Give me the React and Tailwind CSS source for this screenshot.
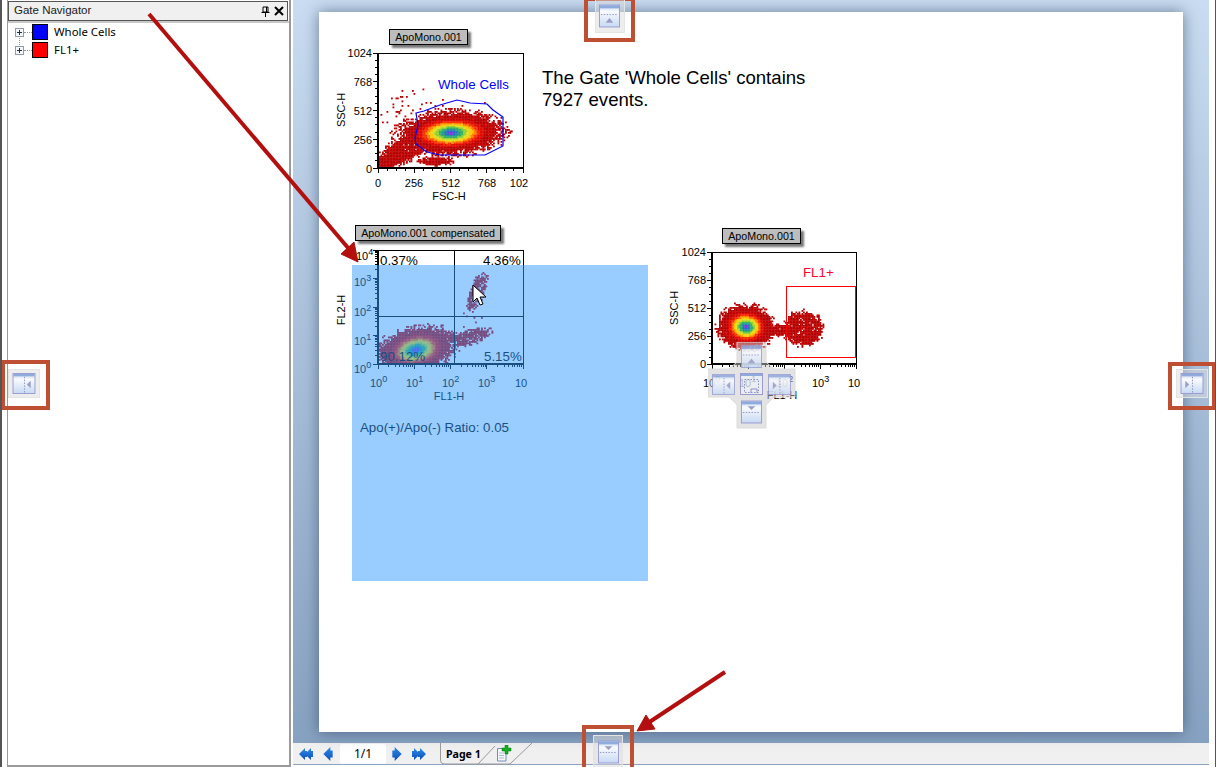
import React from "react";

function rngFrom(seed) {
  let s = seed >>> 0;
  return () => {
    s = (s * 1664525 + 1013904223) >>> 0;
    let t = s ^ (s >>> 15);
    t = (t * 2246822519) >>> 0;
    return ((t ^ (t >>> 13)) >>> 0) / 4294967296;
  };
}

function heat(l, r) {
  if (l > 0.66) return r() < 0.7 ? "#b40000" : "#c80000";
  if (l > 0.56) return "#e00800";
  if (l > 0.49) return "#f83000";
  if (l > 0.43) return "#ff8000";
  if (l > 0.37) return "#ffc800";
  if (l > 0.31) return "#e0e020";
  if (l > 0.25) return "#90d030";
  if (l > 0.18) return "#30b060";
  if (l > 0.12) return "#20909c";
  if (l > 0.07) return "#2868c8";
  return "#8030e0";
}

function density(blobs, box, cell, seed, noise) {
  const r = rngFrom(seed);
  const out = [];
  for (let y = box[1]; y < box[3]; y += cell) {
    for (let x = box[0]; x < box[2]; x += cell) {
      const cx = x + cell / 2;
      const cy = y + cell / 2;
      let best = 9;
      let pick = null;
      for (const b of blobs) {
        const a = ((b.rot || 0) * Math.PI) / 180;
        const dx = cx - b.cx;
        const dy = cy - b.cy;
        const u = (dx * Math.cos(a) + dy * Math.sin(a)) / b.rx;
        const v = (-dx * Math.sin(a) + dy * Math.cos(a)) / b.ry;
        const raw = Math.sqrt(u * u + v * v);
        const l = Math.max(b.floor || 0, raw);
        if (raw < 1.2 && l < best && r() < (b.p ?? 1)) {
          best = l;
          pick = b;
        }
      }
      if (!pick) continue;
      const edge = best > 0.75 ? noise : 0.05;
      const l = best * (1 + (r() - 0.5) * edge);
      if (l < 1) out.push([x, y, heat(l, r)]);
    }
  }
  return out;
}

const cloud1 = density(
  [
    { cx: 451, cy: 133, rx: 51, ry: 21, rot: -2 },
    { cx: 410, cy: 146, rx: 34, ry: 12, rot: -28, floor: 0.84 },
    { cx: 390, cy: 160, rx: 16, ry: 8, rot: -15, floor: 0.74 },
    { cx: 435, cy: 161, rx: 18, ry: 4, floor: 0.85 },
    { cx: 415, cy: 115, rx: 38, ry: 24, floor: 0.9, p: 0.08 },
    { cx: 470, cy: 108, rx: 28, ry: 8, floor: 0.9, p: 0.03 },
  ],
  [379, 54, 522, 167],
  1.5,
  11,
  0.42
);
const cloud2 = density(
  [
    { cx: 416, cy: 350, rx: 38, ry: 22, rot: -12 },
    { cx: 440, cy: 338, rx: 24, ry: 6, floor: 0.85, p: 0.8 },
    { cx: 477, cy: 292, rx: 20, ry: 7, rot: -68, floor: 0.85, p: 0.8 },
    { cx: 470, cy: 337, rx: 20, ry: 7, rot: -18, floor: 0.85, p: 0.8 },
    { cx: 470, cy: 318, rx: 12, ry: 10, floor: 0.9, p: 0.08 },
  ],
  [379, 251, 522, 363],
  1.5,
  23,
  0.4
);
const cloud3 = density(
  [
    { cx: 746, cy: 327, rx: 28, ry: 22, rot: 3 },
    { cx: 773, cy: 330, rx: 17, ry: 6, floor: 0.88 },
    { cx: 803, cy: 329, rx: 19, ry: 17, floor: 0.86, p: 0.9 },
  ],
  [713, 253, 855, 363],
  1.5,
  37,
  0.3
);

function Cloud({ cells }) {
  return (
    <g>
      {cells.map(([x, y, c], i) => (
        <rect key={i} x={x} y={y} width="1.8" height="1.8" fill={c} />
      ))}
    </g>
  );
}

function Ticks({ x0, x1, y0, y1, logX, logY }) {
  const t = [];
  for (let i = 0; i < 4; i++) {
    const a = x0 + ((x1 - x0) * i) / 4;
    const w = (x1 - x0) / 4;
    t.push([a, y1, a, y1 + 5]);
    if (logX) {
      [2, 3, 4, 5, 6, 7, 8, 9].forEach((k) => {
        const p = a + w * Math.log10(k);
        t.push([p, y1, p, y1 + 3]);
      });
    } else {
      [1, 2, 3].forEach((k) => t.push([a + (w * k) / 4, y1, a + (w * k) / 4, y1 + 3]));
    }
  }
  t.push([x1, y1, x1, y1 + 5]);
  for (let i = 0; i < 4; i++) {
    const a = y1 - ((y1 - y0) * i) / 4;
    const h = (y1 - y0) / 4;
    t.push([x0 - 5, a, x0, a]);
    if (logY) {
      [2, 3, 4, 5, 6, 7, 8, 9].forEach((k) => {
        const p = a - h * Math.log10(k);
        t.push([x0 - 3, p, x0, p]);
      });
    } else {
      [1, 2, 3].forEach((k) => t.push([x0 - 3, a - (h * k) / 4, x0, a - (h * k) / 4]));
    }
  }
  t.push([x0 - 5, y0, x0, y0]);
  return (
    <g stroke="#000" strokeWidth="1" shapeRendering="crispEdges">
      {t.map((l, i) => (
        <line key={i} x1={l[0]} y1={l[1]} x2={l[2]} y2={l[3]} />
      ))}
    </g>
  );
}

function Frame({ x0, x1, y0, y1 }) {
  return (
    <g shapeRendering="crispEdges">
      <rect x={x0 - 1} y={y0} width={x1 - x0 + 2} height="1" />
      <rect x={x1} y={y0} width="1" height={y1 - y0 + 1} />
      <rect x={x0 - 1} y={y0} width="2" height={y1 - y0 + 1} />
      <rect x={x0 - 1} y={y1 - 1} width={x1 - x0 + 2} height="2" />
    </g>
  );
}

function Tick10({ x, y, exp }) {
  return (
    <text x={x} y={y} fontSize="11">
      10
      {exp !== undefined && (
        <tspan dy="-5" fontSize="9">
          {exp}
        </tspan>
      )}
    </text>
  );
}

function PlotOne() {
  const gate =
    "416,113 424,111 440,105 457,100 470,103 487,104 493,110 503,117 503,146 485,155 454,155 440,155 427,152 416,144 415,138 418,125";
  return (
    <svg className="w-[200px] h-[158px] mt-px" viewBox="330 46 200 158" fontFamily="Liberation Sans, sans-serif">
      <Cloud cells={cloud1} />
      <polygon points={gate} fill="none" stroke="#0000ff" strokeWidth="1.2" />
      <Frame x0={378} x1={523} y0={53} y1={168} />
      <Ticks x0={378} x1={523} y0={53} y1={168} />
      <g fontSize="11" textAnchor="end">
        <text x="372" y="57">1024</text>
        <text x="372" y="86">768</text>
        <text x="372" y="115">512</text>
        <text x="372" y="144">256</text>
        <text x="372" y="173">0</text>
      </g>
      <g fontSize="11" textAnchor="middle">
        <text x="378" y="187">0</text>
        <text x="414" y="187">256</text>
        <text x="451" y="187">512</text>
        <text x="487" y="187">768</text>
        <text x="519" y="187">102</text>
        <text x="449" y="200">FSC-H</text>
        <text x="0" y="0" transform="translate(345 110) rotate(-90)">SSC-H</text>
      </g>
      <text x="438" y="89" fontSize="13.3" fill="#0000ff">Whole Cells</text>
    </svg>
  );
}

function PlotTwo() {
  return (
    <svg className="w-[200px] h-[160px] mt-[3px]" viewBox="330 244 200 160" fontFamily="Liberation Sans, sans-serif">
      <Cloud cells={cloud2} />
      <g stroke="#000" shapeRendering="crispEdges">
        <line x1="454.5" y1="250" x2="454.5" y2="364" />
        <line x1="378" y1="316.5" x2="523" y2="316.5" />
      </g>
      <Frame x0={378} x1={523} y0={250} y1={364} />
      <Ticks x0={378} x1={523} y0={250} y1={364} logX logY />
      <Tick10 x={356} y={260} exp="4" />
      <Tick10 x={354} y={286} exp="3" />
      <Tick10 x={354} y={316} exp="2" />
      <Tick10 x={354} y={345} exp="1" />
      <Tick10 x={354} y={373} exp="0" />
      <Tick10 x={370} y={387} exp="0" />
      <Tick10 x={406} y={387} exp="1" />
      <Tick10 x={442} y={387} exp="2" />
      <Tick10 x={478} y={387} exp="3" />
      <Tick10 x={515} y={387} />
      <text x="449" y="400" fontSize="11" textAnchor="middle">FL1-H</text>
      <text fontSize="11" textAnchor="middle" transform="translate(345 310) rotate(-90)">FL2-H</text>
      <g fontSize="13.3">
        <text x="380" y="265">0.37%</text>
        <text x="483" y="265">4.36%</text>
        <text x="380" y="361">90.12%</text>
        <text x="484" y="361">5.15%</text>
      </g>
    </svg>
  );
}

function PlotThree() {
  return (
    <svg className="w-[204px] h-[158px] mt-[2px]" viewBox="662 246 204 158" fontFamily="Liberation Sans, sans-serif">
      <Cloud cells={cloud3} />
      <rect x="786.5" y="286.5" width="69" height="71" fill="none" stroke="#ff0000" shapeRendering="crispEdges" />
      <Frame x0={712} x1={856} y0={252} y1={364} />
      <Ticks x0={712} x1={856} y0={252} y1={364} logX />
      <g fontSize="11" textAnchor="end">
        <text x="706" y="256">1024</text>
        <text x="706" y="284">768</text>
        <text x="706" y="312">512</text>
        <text x="706" y="340">256</text>
        <text x="706" y="368">0</text>
      </g>
      <Tick10 x={703} y={387} exp="0" />
      <Tick10 x={739} y={387} exp="1" />
      <Tick10 x={776} y={387} exp="2" />
      <Tick10 x={812} y={387} exp="3" />
      <Tick10 x={848} y={387} />
      <text x="782" y="399" fontSize="11" textAnchor="middle">FL1-H</text>
      <text fontSize="11" textAnchor="middle" transform="translate(678 308) rotate(-90)">SSC-H</text>
      <text x="803" y="277" fontSize="13.3" fill="#ff0033">FL1+</text>
    </svg>
  );
}

function Chip({ className, children }) {
  return (
    <div className={`h-[16px] self-start flex items-center justify-center bg-[#bdbdbd] border border-black text-[10.7px] leading-none text-black shadow-[3px_3px_2px_rgba(60,60,60,0.7)] ${className}`}>
      {children}
    </div>
  );
}

function DockIcon({ dir, className }) {
  const vertical = dir === "up" || dir === "down";
  const id = `dock-${dir}`;
  return (
    <svg className={className} viewBox={vertical ? "0 0 22 24" : "0 0 24 22"}>
      <defs>
        <linearGradient id={id} x1="0" y1="0" x2="0" y2="1">
          <stop offset="0" stopColor="#c4d6f0" />
          <stop offset="0.3" stopColor="#f8fafe" />
          <stop offset="1" stopColor="#c6d9f3" />
        </linearGradient>
      </defs>
      {vertical ? (
        <>
          <rect x="0.5" y="0.5" width="21" height="23" fill={`url(#${id})`} stroke="#9b9bd2" />
          <rect x="1" y="1" width="20" height="3" fill="#8fabdc" />
          <line x1="2" x2="20" y1={dir === "up" ? 10.5 : 12.5} y2={dir === "up" ? 10.5 : 12.5} stroke="#9090cc" strokeDasharray="1.5 1.5" />
          {dir === "up" ? (
            <polygon points="11,14 15,19 7,19" fill="#9c9cc8" />
          ) : (
            <polygon points="7,6 15,6 11,10" fill="#9c9cc8" />
          )}
        </>
      ) : (
        <>
          <rect x="0.5" y="0.5" width="23" height="21" fill={`url(#${id})`} stroke="#9b9bd2" />
          <rect x="1" y="1" width="22" height="2.5" fill="#8fabdc" />
          <line x1="12.5" x2="12.5" y1="4" y2="21" stroke="#8f8fc8" strokeDasharray="1.5 1.5" />
          {dir === "left" ? (
            <polygon points="15,12 19,8 19,16" fill="#9c9cc8" />
          ) : (
            <polygon points="9,12 5,8 5,16" fill="#9c9cc8" />
          )}
        </>
      )}
    </svg>
  );
}

function Glass({ className, children }) {
  return (
    <div className={`flex items-center justify-center shrink-0 bg-[#dcdcdc]/50 border border-[#e4e4e4] ${className}`}>
      {children}
    </div>
  );
}

function RedBox({ className, children }) {
  return <div className={`absolute flex justify-center border-[4px] border-[#bf4f33] ${className}`}>{children}</div>;
}

function Expander() {
  return (
    <svg className="w-[9px] h-[9px] shrink-0" viewBox="0 0 9 9">
      <rect x="0.5" y="0.5" width="8" height="8" fill="#f4f6fa" stroke="#8f9aa8" />
      <path d="M2 4.5H7M4.5 2V7" stroke="#203050" />
    </svg>
  );
}

function TreeRow({ color, label }) {
  return (
    <div className="h-[18px] flex items-center pl-[7px]">
      <Expander />
      <div className="w-[8px] border-t border-dotted border-[#999]" />
      <div className={`w-[16px] h-[16px] border border-black ${color}`} />
      <span className="ml-[6px] text-[11.4px] leading-none text-black font-['Noto_Sans']">{label}</span>
    </div>
  );
}

function Left() {
  return (
    <aside className="w-[284px] ml-[5px] shrink-0 border-l border-r-[2px] border-b-[2px] border-[#9a9a9a] bg-white flex flex-col">
      <div className="h-[20px] mt-px flex items-center justify-between bg-[#f0f0f0] border border-[#555] pl-[5px] pr-[3px] mr-px">
        <span className="text-[11.5px] leading-none text-[#202020]">Gate Navigator</span>
        <div className="flex items-center gap-[4px]">
          <svg className="w-[10px] h-[11px]" viewBox="0 0 10 11" fill="none" stroke="#000">
            <path d="M3 1H8V6H3ZM6.5 1V6M1.5 6.5H9.5M5.5 7V11" />
          </svg>
          <svg className="w-[10px] h-[10px]" viewBox="0 0 10 10" fill="none" stroke="#000" strokeWidth="2">
            <path d="M1 1L9 9M9 1L1 9" />
          </svg>
        </div>
      </div>
      <div className="flex-1 border-t-[2px] border-[#c8c8c8] relative">
        <TreeRow color="bg-[#0000ff]" label="Whole Cells" />
        <TreeRow color="bg-[#ff0000]" label="FL1+" />
        <div className="absolute left-[11px] top-[13px] h-[9px] border-l border-dotted border-[#999]" />
      </div>
    </aside>
  );
}

function NavArrow({ dir, double }) {
  const pts = dir === "left" ? "0,6 6,0 6,3 8,3 8,9 6,9 6,12" : "8,6 2,0 2,3 0,3 0,9 2,9 2,12";
  return (
    <svg className="h-[14px] shrink-0" width={double ? 14 : 10} viewBox={double ? "0 0 14 12" : "0 0 8 12"}>
      <defs>
        <linearGradient id="nav" x1="0" y1="0" x2="0" y2="1">
          <stop offset="0" stopColor="#2f8ae8" />
          <stop offset="1" stopColor="#0a4fb8" />
        </linearGradient>
      </defs>
      <polygon points={pts} fill="url(#nav)" />
      {double && <polygon points={pts} fill="url(#nav)" transform="translate(6 0)" />}
    </svg>
  );
}

function TabBar() {
  return (
    <div className="h-[22px] mb-[2px] bg-[#f0f0f0] border-b border-[#8aa3c0] flex items-center pl-[6px] shrink-0">
      <NavArrow dir="left" double />
      <div className="w-[10px]" />
      <NavArrow dir="left" />
      <div className="ml-[7px] w-[46px] h-[20px] bg-white rounded-[2px] flex items-center justify-center text-[12px] text-black font-['Noto_Sans']">1/1</div>
      <div className="w-[6px]" />
      <NavArrow dir="right" />
      <div className="w-[10px]" />
      <NavArrow dir="right" double />
      <div className="ml-[14px] relative h-[22px] w-[96px] flex items-center pl-[6px] gap-[15px]">
        <svg className="absolute inset-0 w-[96px] h-[22px]" viewBox="0 0 96 22" fill="none">
          <path d="M0.5 0V17Q0.5 21 4 21H38L55 3" stroke="#9a9a9a" />
          <path d="M38 21H70L92 0" stroke="#9a9a9a" />
        </svg>
        <span className="relative text-[10.6px] leading-[14px] font-bold text-black font-['Noto_Sans']">Page 1</span>
        <svg className="relative w-[16px] h-[17px]" viewBox="0 0 16 17">
          <path d="M1.5 3.5H10V16H1.5Z" fill="#f4f8fd" stroke="#6f8fb5" />
          <path d="M3 8H8M3 10.5H8M3 13H8" stroke="#a8bdd8" />
          <path d="M9 0H12V3H15V6H12V9H9V6H6V3H9Z" fill="#10b020" stroke="#087010" strokeWidth="0.5" />
        </svg>
      </div>
    </div>
  );
}

function Page() {
  return (
    <div className="relative flex-1 bg-white shadow-[0_0_14px_rgba(40,60,95,0.6)] pl-[11px] pt-[17px] flex flex-col">
      <div className="flex">
        <figure className="w-[200px] flex flex-col">
          <Chip className="ml-[59px] w-[79px]">ApoMono.001</Chip>
          <PlotOne />
        </figure>
        <p className="ml-[12px] mt-[38px] w-[300px] text-[18.6px] leading-[22px] text-black">
          The Gate 'Whole Cells' contains
          <br />
          7927 events.
        </p>
      </div>
      <div className="flex mt-[21px]">
        <figure className="w-[200px] flex flex-col">
          <Chip className="ml-[25px] w-[146px]">ApoMono.001 compensated</Chip>
          <PlotTwo />
          <p className="ml-[30px] mt-[17px] text-[13.3px] leading-[14px] text-black whitespace-nowrap">Apo(+)/Apo(-) Ratio: 0.05</p>
        </figure>
        <figure className="ml-[132px] pt-[3px] w-[204px] flex flex-col">
          <Chip className="ml-[60px] w-[79px]">ApoMono.001</Chip>
          <PlotThree />
        </figure>
      </div>
      <div className="absolute left-[33px] top-[253px] w-[296px] h-[316px] bg-[#3399ff]/50" />
      <svg className="absolute left-[153px] top-[272px] w-[16px] h-[24px]" viewBox="0 0 16 24">
        <polygon points="1,1 1,18 5,14 8,21 11,20 8,13 14,13" fill="#fff" stroke="#000" />
      </svg>
    </div>
  );
}

function Compass() {
  return (
    <div className="absolute left-[708px] top-[342px] w-[88px] h-[87px] pl-[4px] pt-[3px] grid grid-cols-[23px_23px_23px] grid-rows-[23px_22px_24px] gap-[5px] place-items-center">
      <svg className="absolute inset-0 w-[88px] h-[87px]" viewBox="0 0 88 87">
        <polygon points="29,0 58,0 58,20 66,27 87,27 87,55 66,55 58,63 58,86 29,86 29,63 21,55 0,55 0,27 21,27 29,20" fill="#c8c8c8" fillOpacity="0.5" stroke="#dcdcdc" />
      </svg>
      <DockIcon dir="up" className="relative col-start-2 row-start-1 w-[21px] h-[23px] opacity-85" />
      <DockIcon dir="left" className="relative col-start-1 row-start-2 w-[23px] h-[21px] opacity-85" />
      <svg className="relative col-start-2 row-start-2 w-[23px] h-[22px]" viewBox="0 0 23 22">
        <rect x="0.5" y="0.5" width="22" height="21" fill="#eef3fb" fillOpacity="0.6" stroke="#9b9bd2" />
        <rect x="1" y="1" width="21" height="2" fill="#8fabdc" />
        <rect x="4.5" y="6.5" width="14" height="13" fill="none" stroke="#8f8fc8" strokeDasharray="1.5 1.5" />
        <path d="M11 20V16H17V20" fill="none" stroke="#8f8fc8" />
      </svg>
      <DockIcon dir="right" className="relative col-start-3 row-start-2 w-[23px] h-[21px] opacity-85" />
      <DockIcon dir="down" className="relative col-start-2 row-start-3 w-[21px] h-[24px]" />
    </div>
  );
}

function Overlays() {
  return (
    <>
      <Compass />

      <RedBox className="left-[584px] -top-[3px] w-[51px] h-[45px] items-start">
        <Glass className="w-[30px] h-[34px] -mt-[2px]">
          <DockIcon dir="up" className="w-[21px] h-[24px]" />
        </Glass>
      </RedBox>

      <RedBox className="left-px top-[360px] w-[49px] h-[50px] items-center pr-[3px] pb-[3px]">
        <Glass className="w-[32px] h-[29px]">
          <DockIcon dir="left" className="w-[24px] h-[21px]" />
        </Glass>
      </RedBox>

      <RedBox className="left-[1168px] top-[362px] w-[48px] h-[48px] items-center pb-[5px]">
        <Glass className="w-[32px] h-[29px]">
          <DockIcon dir="right" className="w-[24px] h-[21px]" />
        </Glass>
      </RedBox>

      <RedBox className="left-[582px] top-[725px] w-[52px] h-[46px] items-start pt-[6px]">
        <Glass className="w-[30px] h-[33px]">
          <DockIcon dir="down" className="w-[21px] h-[24px]" />
        </Glass>
      </RedBox>

      <svg className="absolute inset-0 w-[1216px] h-[767px] pointer-events-none" viewBox="0 0 1216 767">
        <g fill="#b30f0f" stroke="#b30f0f">
          <line x1="149" y1="14" x2="349" y2="249" strokeWidth="4" />
          <polygon points="358,262 341,254 354,242" strokeWidth="1" />
          <line x1="725" y1="672" x2="648" y2="723" strokeWidth="4" />
          <polygon points="637,731 646,715 655,729" strokeWidth="1" />
        </g>
      </svg>
    </>
  );
}

export default function App() {
  return (
    <div className="relative w-[1216px] h-[767px] overflow-hidden flex bg-white border-l-2 border-r border-[#555] font-['Liberation_Sans',sans-serif]">
      <Left />
      <main className="ml-[2px] mr-[6px] flex-1 min-w-0 flex flex-col">
        <div className="flex-1 min-h-0 flex pl-[26px] pr-[26px] pt-[12px] pb-[11px] bg-gradient-to-b from-[#c9dcf1] to-[#87a1c0]">
          <Page />
        </div>
        <TabBar />
      </main>
      <div className="absolute -left-[2px] top-0 w-[1216px] h-[767px]">
        <Overlays />
      </div>
    </div>
  );
}
